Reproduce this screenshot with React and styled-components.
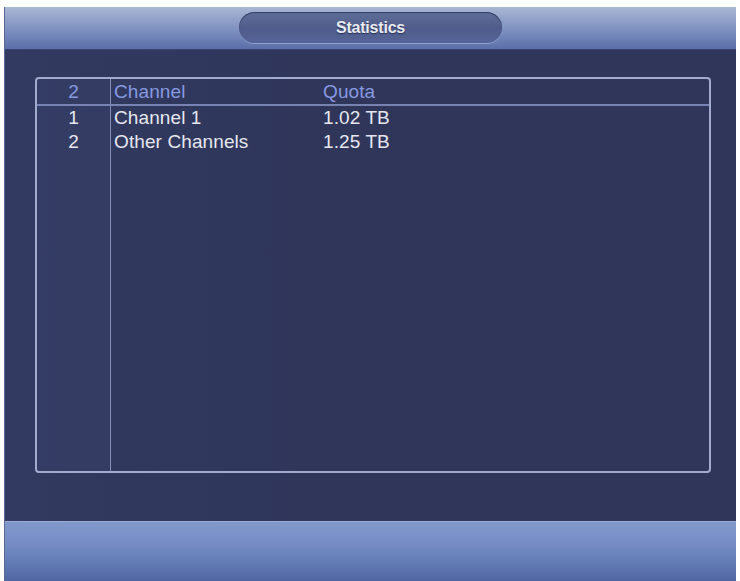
import React from "react";
import styled, { createGlobalStyle } from "styled-components";

const Global = createGlobalStyle`
  html, body {
    margin: 0;
    padding: 0;
    background: #ffffff;
  }
  body {
    font-family: "Liberation Sans", Arial, sans-serif;
  }
`;

const Frame = styled.div`
  margin: 7px 0 0 4px;
  width: 732px;
  height: 574px;
  display: flex;
  flex-direction: column;
  background: #2f365a;
  border-left: 1px solid #5d6796;
  box-sizing: border-box;
`;

const Header = styled.div`
  height: 43px;
  flex: none;
  display: flex;
  align-items: flex-start;
  justify-content: center;
  padding-top: 5px;
  box-sizing: border-box;
  background: linear-gradient(
    to bottom,
    #a9b6d4 0%,
    #8d9dc8 35%,
    #6e82b8 75%,
    #5b6ea8 100%
  );
  border-bottom: 1px solid #3a4576;
`;

const TitlePill = styled.div`
  width: 263px;
  height: 31px;
  border-radius: 16px;
  display: flex;
  align-items: center;
  justify-content: center;
  background: linear-gradient(to bottom, #5f6d99 0%, #4f5c8a 55%, #56649a 100%);
  box-shadow: inset 0 1px 1px rgba(20, 28, 60, 0.6), 0 1px 0 rgba(190, 200, 230, 0.5);
  color: #e9ebf2;
  font-size: 16px;
  font-weight: bold;
  letter-spacing: -0.2px;
  text-shadow: 0 1px 1px rgba(20, 25, 50, 0.7);
`;

const Content = styled.div`
  flex: 1;
  padding: 27px 25px 48px 30px;
  box-sizing: border-box;
  display: flex;
  background: linear-gradient(to right, #323a61 0%, #2f365a 40%, #2f365a 100%);
`;

const TableBox = styled.div`
  flex: 1;
  display: flex;
  flex-direction: column;
  border: 2px solid #a2aacd;
  border-radius: 4px;
  overflow: hidden;
`;

const Row = styled.div`
  display: grid;
  grid-template-columns: 74px 209px 1fr;
  height: ${(p) => p.$h || 24}px;
  flex: ${(p) => (p.$fill ? 1 : "none")};
  border-bottom: ${(p) => (p.$head ? "2px solid #7983b3" : "none")};
  color: ${(p) => (p.$head ? "#8799e0" : "#e6e7ef")};
  font-size: 19px;
  letter-spacing: 0.1px;
  line-height: ${(p) => p.$h || 24}px;
`;

const Cell = styled.div`
  padding-left: ${(p) => (p.$index ? 0 : 3)}px;
  text-align: ${(p) => (p.$index ? "center" : "left")};
  border-right: ${(p) => (p.$index ? "1px solid #858db6" : "none")};
  white-space: nowrap;
  background: ${(p) => (p.$index ? "rgba(70, 80, 125, 0.15)" : "transparent")};
`;

const Footer = styled.div`
  height: 59px;
  flex: none;
  background: linear-gradient(
    to bottom,
    #8198cb 0%,
    #7890c6 30%,
    #637bb5 70%,
    #4f66a2 100%
  );
  border-top: 1px solid #9aaad5;
`;

const rows = [
  { id: 1, channel: "Channel 1", quota: "1.02 TB" },
  { id: 2, channel: "Other Channels", quota: "1.25 TB" },
];

export default function App() {
  return (
    <>
      <Global />
      <Frame>
        <Header>
          <TitlePill>Statistics</TitlePill>
        </Header>
        <Content>
          <TableBox>
            <Row $head $h={25}>
              <Cell $index>{rows.length}</Cell>
              <Cell>Channel</Cell>
              <Cell>Quota</Cell>
            </Row>
            {rows.map((r) => (
              <Row key={r.id}>
                <Cell $index>{r.id}</Cell>
                <Cell>{r.channel}</Cell>
                <Cell>{r.quota}</Cell>
              </Row>
            ))}
            <Row $fill>
              <Cell $index />
              <Cell />
              <Cell />
            </Row>
          </TableBox>
        </Content>
        <Footer />
      </Frame>
    </>
  );
}
